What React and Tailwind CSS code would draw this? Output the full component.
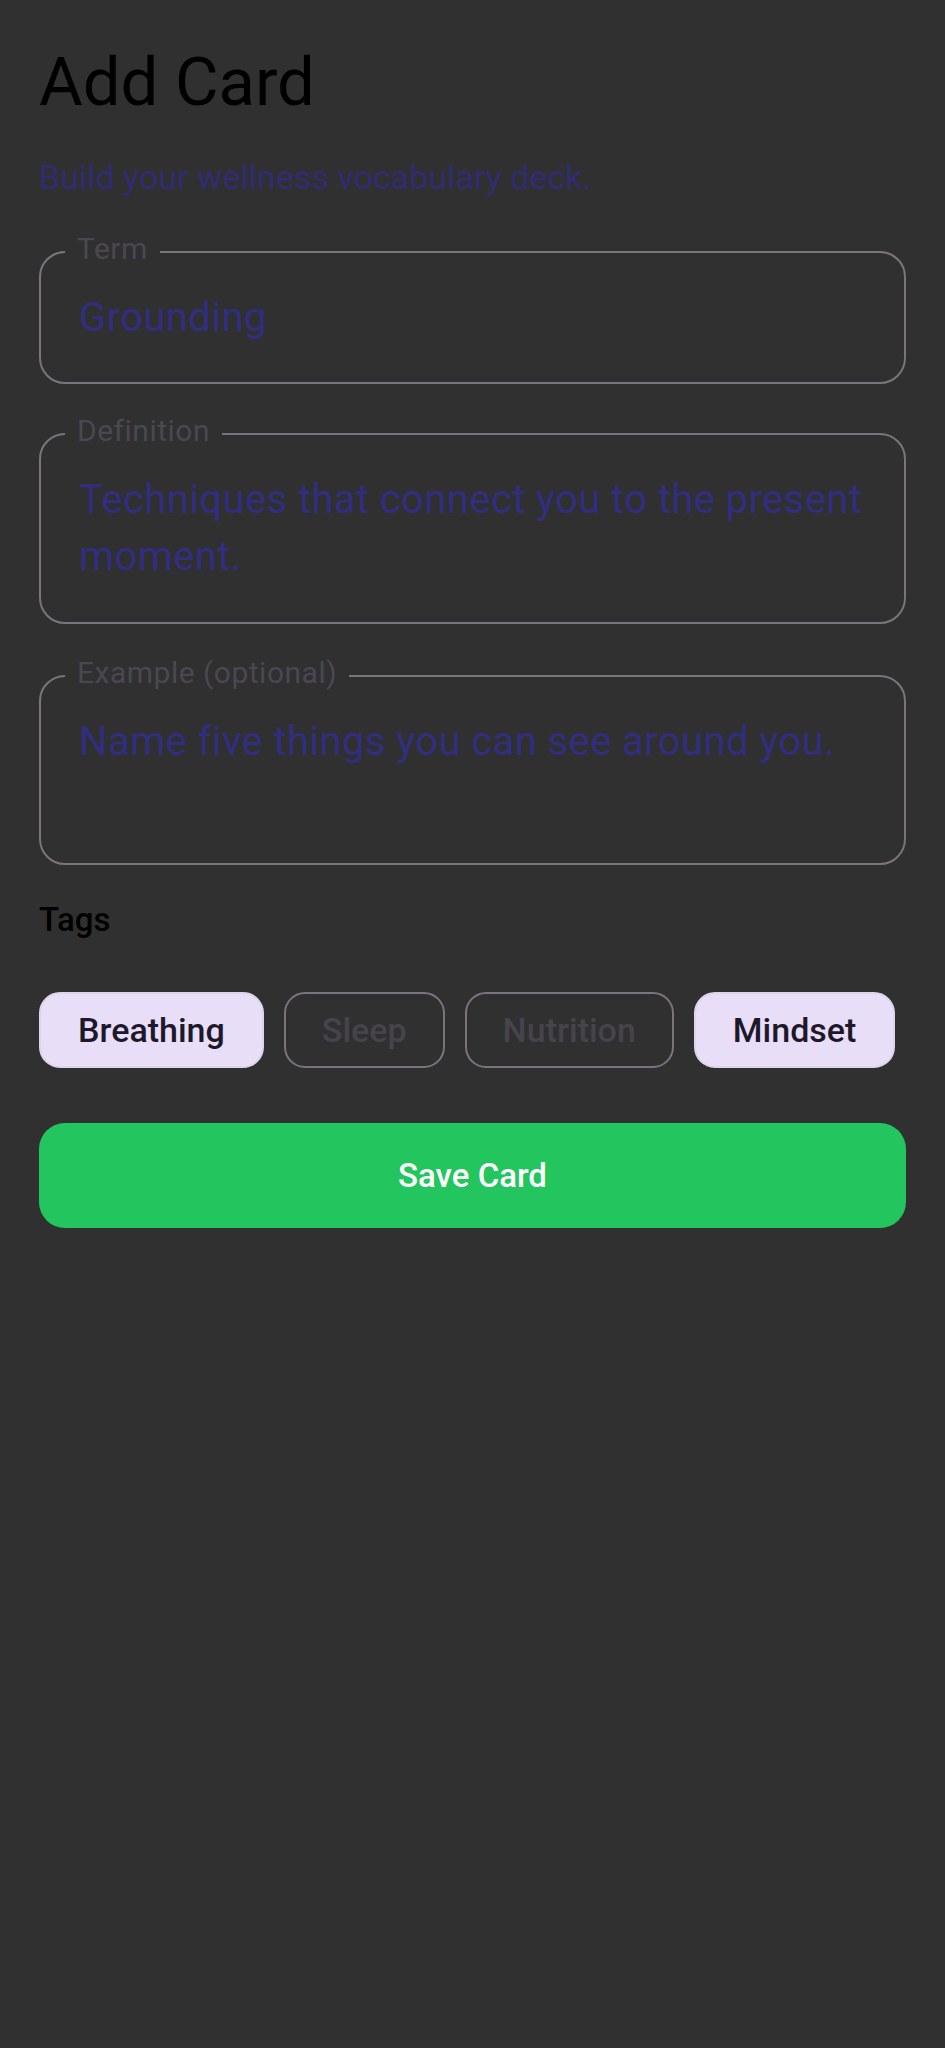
import React from "react";

function Field({ label, children, minH }) {
  return (
    <div className="relative">
      <div
        className={`border-2 border-[#79747e] rounded-[26px] px-[38px] pt-[36px] pb-[36px] ${minH || ""}`}
      >
        <div className="text-[40px] leading-[57px] tracking-[0.4px] text-[#312e81]">
          {children}
        </div>
      </div>
      <div className="absolute top-[-20px] left-[26px] px-[12px] bg-[#303030] text-[30px] leading-[36px] tracking-[0.5px] text-[#4a4753]">
        {label}
      </div>
    </div>
  );
}

function Chip({ label, selected }) {
  return (
    <div
      className={
        selected
          ? "h-[76px] flex items-center px-[37px] rounded-[21px] border-2 border-[#ddd5e9] bg-[#e8def8] text-[#1d192b] text-[34px] font-medium"
          : "h-[76px] flex items-center px-[36px] rounded-[21px] border-2 border-[#79747e] text-[#46434d] text-[34px] font-medium"
      }
    >
      {label}
    </div>
  );
}

export default function App() {
  return (
    <div
      className="min-h-screen bg-[#303030] px-[39px] pt-[42px]"
      style={{ fontFamily: "Roboto, 'Noto Sans', sans-serif" }}
    >
      <h1 className="text-[67px] leading-[80px] font-normal text-black">Add Card</h1>
      <p className="mt-[35px] text-[34px] leading-[40px] text-[#2f2c74]">
        Build your wellness vocabulary deck.
      </p>

      <div className="mt-[54px]">
        <Field label="Term">Grounding</Field>
      </div>
      <div className="mt-[49px]">
        <Field label="Definition" minH="min-h-[191px]">
          Techniques that connect you to the present
          <br />
          moment.
        </Field>
      </div>
      <div className="mt-[51px]">
        <Field label="Example (optional)" minH="min-h-[190px]">
          Name five things you can see around you.
        </Field>
      </div>

      <div className="mt-[35px] text-[33px] leading-[40px] font-medium text-black">Tags</div>

      <div className="mt-[52px] flex gap-[20px]">
        <Chip label="Breathing" selected />
        <Chip label="Sleep" />
        <Chip label="Nutrition" />
        <Chip label="Mindset" selected />
      </div>

      <button className="mt-[55px] w-full h-[105px] rounded-[26px] bg-[#22c55e] text-white text-[33px] font-medium flex items-center justify-center">
        Save Card
      </button>
    </div>
  );
}
